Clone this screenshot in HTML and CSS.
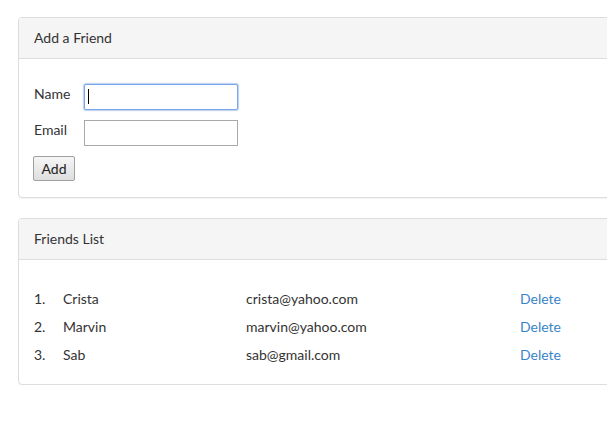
FILE: index.html
```html
<!DOCTYPE html>
<html>
<head>
<meta charset="utf-8">
<link rel="stylesheet" href="styles.css">
</head>
<body>
<div class="page">
  <div class="panel">
    <div class="panel-heading">Add a Friend</div>
    <div class="panel-body">
      <form class="friend-form">
        <div class="form-row">
          <label class="form-label">Name</label>
          <input class="text-input focused" type="text">
        </div>
        <div class="form-row">
          <label class="form-label">Email</label>
          <input class="text-input" type="text">
        </div>
        <div class="form-row">
          <button type="button" class="btn">Add</button>
        </div>
      </form>
    </div>
  </div>
  <div class="panel">
    <div class="panel-heading">Friends List</div>
    <div class="panel-body">
      <ol class="friend-list">
        <li class="friend-row"><span class="num">1.</span><span class="name">Crista</span><span class="email">crista@yahoo.com</span><a class="del">Delete</a></li>
        <li class="friend-row"><span class="num">2.</span><span class="name">Marvin</span><span class="email">marvin@yahoo.com</span><a class="del">Delete</a></li>
        <li class="friend-row"><span class="num">3.</span><span class="name">Sab</span><span class="email">sab@gmail.com</span><a class="del">Delete</a></li>
      </ol>
    </div>
  </div>
</div>
</body>
</html>
```
FILE: styles.css
```css
html, body {
  margin: 0;
  padding: 0;
  background: #fff;
  overflow: hidden;
}
body {
  font-family: Lato, "Open Sans", sans-serif;
  font-size: 14px;
  line-height: 20px;
  color: #333;
}
.page {
  padding: 17px 0 0 18px;
  width: 640px;
  display: flex;
  flex-direction: column;
  gap: 20px;
}
.panel {
  border: 1px solid #ddd;
  border-radius: 4px;
  background: #fff;
  box-shadow: 0 1px 1px rgba(0,0,0,0.05);
}
.panel-heading {
  background: #f5f5f5;
  border-bottom: 1px solid #ddd;
  padding: 10px 15px;
  border-radius: 3px 3px 0 0;
}
.panel-body {
  padding: 15px;
}
.friend-form {
  margin: 10px 0 1px 0;
  display: flex;
  flex-direction: column;
  gap: 10px;
}
.form-row {
  display: flex;
  align-items: center;
}
.form-label {
  width: 50px;
  margin-top: -7px;
}
.text-input {
  box-sizing: border-box;
  width: 154px;
  height: 26px;
  border: 1px solid #a9a9a9;
  padding: 2px 4px;
  font-family: Lato, sans-serif;
  font-size: 14px;
  outline: none;
  margin: 0;
}
.text-input.focused {
  border: 1px solid #7aa7e8;
  box-shadow: 0 0 1px 1px rgba(120,160,230,0.5);
  border-radius: 2px;
  background-image: linear-gradient(#000, #000);
  background-size: 1px 15px;
  background-position: 3px 4px;
  background-repeat: no-repeat;
}
.btn {
  box-sizing: border-box;
  width: 42px;
  height: 25px;
  margin: 0 0 0 -1px;
  padding: 0;
  font-family: Lato, sans-serif;
  font-size: 14px;
  color: #222;
  border: 1px solid #a0a0a0;
  border-radius: 2px;
  background: linear-gradient(#f6f6f6, #dedede);
}
.friend-list {
  list-style: none;
  margin: 10px 0 0 0;
  padding: 0;
}
.friend-row {
  display: grid;
  grid-template-columns: 29px 183px 274px auto;
  height: 28px;
  align-items: center;
}
.del {
  color: #3a85c6;
  cursor: pointer;
}
```
